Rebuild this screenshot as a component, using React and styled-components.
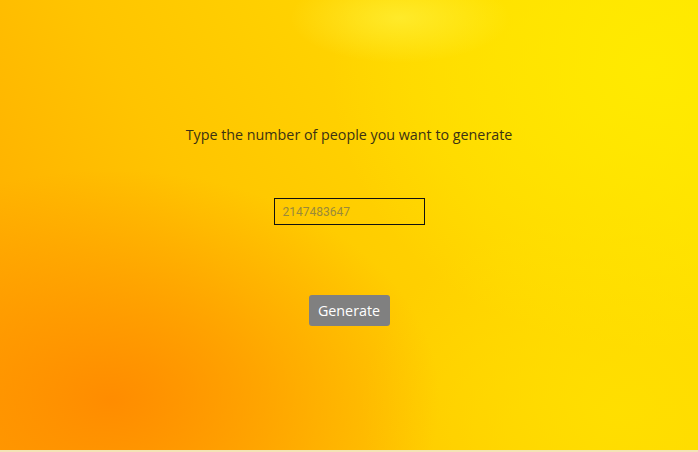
import React from "react";
import styled, { createGlobalStyle } from "styled-components";

const GlobalStyle = createGlobalStyle`
  html, body {
    margin: 0;
    padding: 0;
    background: #f3e4b6;
  }
  body {
    font-family: "Open Sans", "Noto Sans", sans-serif;
  }
`;

const Page = styled.main`
  height: 450px;
  display: flex;
  flex-direction: column;
  align-items: center;
  padding-top: 125px;
  box-sizing: border-box;
  background:
    radial-gradient(ellipse 110px 45px at 400px 18px, rgba(255, 244, 70, 0.6), rgba(255, 240, 40, 0) 100%),
    radial-gradient(ellipse 330px 230px at 110px 400px, rgba(255, 136, 0, 0.9), rgba(255, 140, 0, 0) 100%),
    radial-gradient(ellipse 320px 280px at 650px 70px, rgba(255, 236, 0, 0.85), rgba(255, 236, 0, 0) 100%),
    radial-gradient(ellipse 260px 200px at 620px 410px, rgba(255, 224, 0, 0.85), rgba(255, 224, 0, 0) 100%),
    linear-gradient(60deg, #ffa600 0%, #ffc400 35%, #ffd600 65%, #ffe400 100%);
`;

const Prompt = styled.p`
  margin: 0;
  font-size: 14.3px;
  color: #3b3213;
`;

const CountInput = styled.input`
  margin-top: 54px;
  width: 151px;
  height: 27px;
  box-sizing: border-box;
  border: 1px solid #111;
  background: transparent;
  padding: 0 8px;
  font-family: "Roboto", sans-serif;
  font-size: 12px;
  color: #333;
  outline: none;
  &::placeholder {
    color: #9a8a3a;
  }
`;

const GenerateButton = styled.button`
  margin-top: 70px;
  width: 81px;
  height: 31px;
  border: none;
  border-radius: 3px;
  background: #808080;
  color: #fff;
  font-family: "Open Sans", sans-serif;
  font-size: 14.3px;
  cursor: pointer;
`;

export default function App() {
  return (
    <>
      <GlobalStyle />
      <Page>
        <Prompt>Type the number of people you want to generate</Prompt>
        <CountInput type="number" placeholder="2147483647" />
        <GenerateButton>Generate</GenerateButton>
      </Page>
    </>
  );
}
